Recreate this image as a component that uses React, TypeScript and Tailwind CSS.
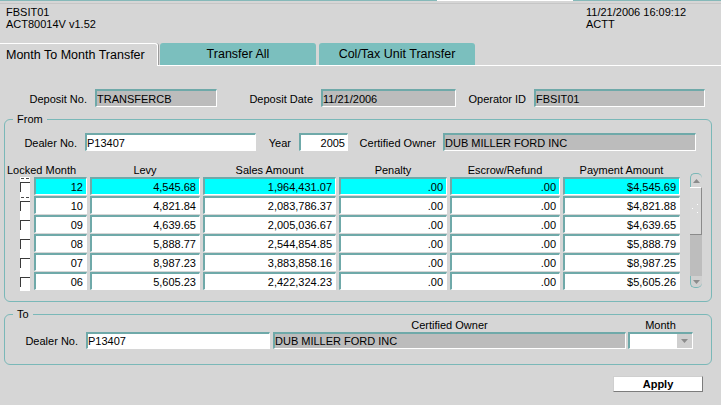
import React from "react";

const rows: { cells: string[]; hot?: boolean; dashed?: boolean }[] = [
  { cells: ["12", "4,545.68", "1,964,431.07", ".00", ".00", "$4,545.69"], hot: true, dashed: true },
  { cells: ["10", "4,821.84", "2,083,786.37", ".00", ".00", "$4,821.88"], dashed: true },
  { cells: ["09", "4,639.65", "2,005,036.67", ".00", ".00", "$4,639.65"] },
  { cells: ["08", "5,888.77", "2,544,854.85", ".00", ".00", "$5,888.79"] },
  { cells: ["07", "8,987.23", "3,883,858.16", ".00", ".00", "$8,987.25"] },
  { cells: ["06", "5,605.23", "2,422,324.23", ".00", ".00", "$5,605.26"] },
];

// one width per table column, month first
const colW = ["w-[53px]", "w-[110px]", "w-[133px]", "w-[108px]", "w-[110px]", "w-[117px]"];
const headers = ["Levy", "Sales Amount", "Penalty", "Escrow/Refund", "Payment Amount"];

const inset = "border-t-2 border-l-2 border-[#6fa9a9] border-r border-b border-r-white border-b-white";
const grayField = `h-[18px] bg-[#bcbcbc] ${inset} flex items-center overflow-hidden whitespace-nowrap leading-[14px]`;
const whiteField = `h-[18px] bg-white ${inset} flex items-center overflow-hidden whitespace-nowrap leading-[14px]`;

function Label({ w, children }: { w: string; children: React.ReactNode }) {
  return <div className={`${w} shrink-0 whitespace-nowrap pt-[2px] text-right`}>{children}</div>;
}

function Checkbox({ dashed }: { dashed?: boolean }) {
  return (
    <div className="flex w-[10px] shrink-0 flex-col self-stretch bg-white">
      {dashed ? (
        <div className="ml-[1px] mt-[1px] h-0 w-[8px] border-t border-dashed border-[#4a4a4a]" />
      ) : (
        <div className="mt-[2px] h-0" />
      )}
      <div className="mt-[3px] h-[10px] w-[10px] border-l border-t border-[#3a3a3a] bg-white" />
    </div>
  );
}

function Scrollbar() {
  return (
    <div className="-mt-[4px] ml-[10px] flex h-[115px] w-[12px] shrink-0 flex-col">
      <div className="flex h-[14px] items-center justify-center rounded-t-[5px] border-l border-t border-[#79b7b7] bg-[#d6d6d6]">
        <svg width="7" height="4" viewBox="0 0 7 4">
          <path d="M0 4 L3.5 0 L7 4 Z" fill="#8c8c8c" />
        </svg>
      </div>
      <div className="relative h-[48px] border-b border-r border-t border-[#8a8a8a] border-t-white bg-[#d8d8d8]">
        <div className="absolute left-[2px] top-[16px] flex flex-col gap-[3px]">
          <div className="ml-[5px] h-[1px] w-[1px] bg-white" />
          <div className="h-[1px] w-[1px] bg-white" />
          <div className="ml-[5px] h-[1px] w-[1px] bg-white" />
        </div>
      </div>
      <div className="flex-1 bg-[#bdbdbd]" />
      <div className="flex h-[12px] items-center justify-center rounded-b-[5px] border-b border-l border-[#79b7b7] bg-[#d0d0d0]">
        <svg width="7" height="4" viewBox="0 0 7 4">
          <path d="M0 0 L3.5 4 L7 0 Z" fill="#8c8c8c" />
        </svg>
      </div>
    </div>
  );
}

export default function App() {
  return (
    <div className="h-[405px] w-[721px] overflow-hidden bg-[#d6d6d6] font-['Liberation_Sans',Arial,sans-serif] text-[11px] text-black">
      {/* window edge */}
      <div className="flex h-[1px]">
        <div className="w-[437px] bg-[#86b9b9]" />
        <div className="w-[136px] bg-white" />
        <div className="flex-1 bg-[#86b9b9]" />
      </div>
      <div className="mt-[2px] h-[1px] bg-[#c6c6c6]" />

      <div className="grid grid-cols-[580px_1fr] pl-[6px] pt-[2px] leading-[12px]">
        <div>
          <div>FBSIT01</div>
          <div>ACT80014V v1.52</div>
        </div>
        <div>
          <div>11/21/2006 16:09:12</div>
          <div>ACTT</div>
        </div>
      </div>

      {/* tabs */}
      <div className="mt-[13px] flex h-[23px] items-end text-[12.5px]">
        <div className="flex h-[23px] w-[158px] shrink-0 items-center rounded-tr-[3px] border-r border-t border-white pl-[6px] shadow-[1px_0_0_#9c9c9c]">
          Month To Month Transfer
        </div>
        <div className="flex h-[23px] flex-1 items-end border-b border-white">
          <div className="ml-[2px] flex h-[22px] w-[156px] items-center justify-center rounded-t-[3px] bg-[#7bbfbe]">
            Transfer All
          </div>
          <div className="ml-[3px] flex h-[22px] w-[156px] items-center justify-center rounded-t-[3px] bg-[#7bbfbe]">
            Col/Tax Unit Transfer
          </div>
        </div>
      </div>

      {/* deposit */}
      <div className="mt-[23px] flex h-[18px] items-center">
        <Label w="w-[87px]">Deposit No.</Label>
        <div className={`ml-[8px] w-[122px] ${grayField}`}>TRANSFERCB</div>
        <Label w="w-[96px]">Deposit Date</Label>
        <div className={`ml-[8px] w-[135px] ${grayField}`}>11/21/2006</div>
        <Label w="w-[70px]">Operator ID</Label>
        <div className={`ml-[8px] w-[171px] ${grayField}`}>FBSIT01</div>
      </div>

      {/* from */}
      <fieldset className="ml-[4px] mt-[6px] w-[708px] rounded-[6px] border border-[#7ab8b8] pb-[10px]">
        <legend className="ml-[8px] px-[4px] leading-[12px]">From</legend>
        <div className="mt-[8px] flex h-[18px] items-center">
          <Label w="w-[72px]">Dealer No.</Label>
          <div className={`ml-[8px] w-[171px] ${whiteField}`}>P13407</div>
          <Label w="w-[35px]">Year</Label>
          <div className={`ml-[8px] w-[49px] justify-end pr-[2px] ${whiteField}`}>2005</div>
          <Label w="w-[88px]">Certified Owner</Label>
          <div className={`ml-[7px] w-[253px] ${grayField}`}>DUB MILLER FORD INC</div>
        </div>

        <div className="mt-[13px] flex h-[13px] gap-[3px] pl-[2px] leading-[13px]">
          <div className="w-[80px] whitespace-nowrap">Locked Month</div>
          {headers.map((h, i) => (
            <div key={h} className={`${colW[i + 1]} text-center`}>
              {h}
            </div>
          ))}
        </div>

        <div className="flex">
          <div className="flex flex-col pl-[15px]">
            {rows.map((r) => (
              <div key={r.cells[0]} className="flex h-[19px] items-start">
                <Checkbox dashed={r.dashed} />
                <div className="ml-[4px] flex gap-[3px]">
                  {r.cells.map((c, i) => (
                    <div
                      key={i}
                      className={`${colW[i]} flex h-[18px] items-center justify-end pr-[3px] leading-[14px] ${inset} ${
                        r.hot ? "bg-[#00ffff]" : "bg-white"
                      }`}
                    >
                      {c}
                    </div>
                  ))}
                </div>
              </div>
            ))}
          </div>
          <Scrollbar />
        </div>
      </fieldset>

      {/* to */}
      <fieldset className="ml-[4px] mt-[6px] w-[708px] rounded-[6px] border border-[#7ab8b8] pb-[15px]">
        <legend className="ml-[8px] px-[4px] leading-[12px]">To</legend>
        <div className="flex h-[11px] leading-[11px]">
          <div className="w-[268px]" />
          <div className="w-[353px] text-center">Certified Owner</div>
          <div className="ml-[2px] w-[65px] text-center">Month</div>
        </div>
        <div className="mt-[1px] flex h-[17px] items-center">
          <Label w="w-[73px]">Dealer No.</Label>
          <div className={`ml-[8px] w-[184px] !h-[17px] ${whiteField}`}>P13407</div>
          <div className={`ml-[3px] w-[353px] !h-[17px] ${grayField}`}>DUB MILLER FORD INC</div>
          <div className={`ml-[2px] w-[65px] !h-[17px] justify-end ${whiteField}`}>
            <div className="flex h-full w-[15px] items-center justify-center bg-[#cfcfcf]">
              <svg width="7" height="4" viewBox="0 0 7 4">
                <path d="M0 0 L3.5 4 L7 0 Z" fill="#8c8c8c" />
              </svg>
            </div>
          </div>
        </div>
      </fieldset>

      <div className="ml-[613px] mt-[11px] flex h-[16px] w-[90px] items-center justify-center border border-[#cfcfcf] border-b-[#7c7c7c] border-r-[#7c7c7c] bg-white font-bold">
        Apply
      </div>
    </div>
  );
}
